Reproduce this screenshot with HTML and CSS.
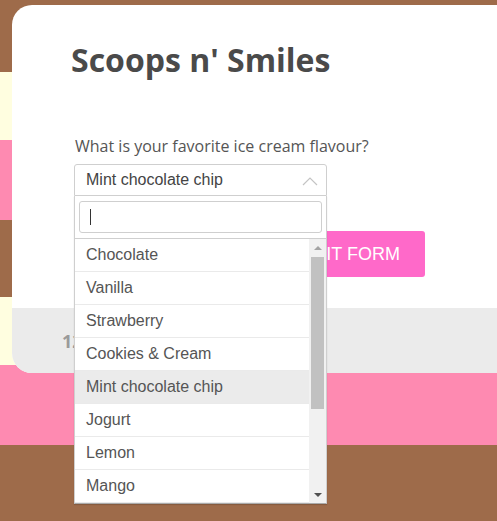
FILE: index.html
```html
<!DOCTYPE html>
<html lang="en">
<head>
<meta charset="utf-8">
<title>Scoops n' Smiles</title>
<link rel="stylesheet" href="styles.css">
</head>
<body>
<div class="card">
  <div class="card-body">
    <h1 class="title">Scoops n' Smiles</h1>
    <form class="form">
      <label class="label">What is your favorite ice cream flavour?</label>
      <div class="select-wrap">
        <div class="select">
          <span class="select-value">Mint chocolate chip</span>
          <svg class="chevron" width="16" height="10" viewBox="0 0 16 10"><polyline points="1,9 8,2 15,9" fill="none" stroke="#c4c4c4" stroke-width="1.2"/></svg>
        </div>
        <div class="dropdown">
          <div class="search"><div class="search-input"><span class="caret"></span></div></div>
          <div class="results">
            <ul class="options">
              <li class="option">Chocolate</li>
              <li class="option">Vanilla</li>
              <li class="option">Strawberry</li>
              <li class="option">Cookies &amp; Cream</li>
              <li class="option active">Mint chocolate chip</li>
              <li class="option">Jogurt</li>
              <li class="option">Lemon</li>
              <li class="option">Mango</li>
            </ul>
            <div class="scrollbar">
              <div class="sb-btn"><span class="tri-up"></span></div>
              <div class="sb-track"><div class="sb-thumb"></div></div>
              <div class="sb-btn"><span class="tri-down"></span></div>
            </div>
          </div>
        </div>
      </div>
      <div class="actions">
        <button type="button" class="submit">SUBMIT FORM</button>
      </div>
    </form>
  </div>
  <div class="card-footer">
    <span class="footer-text">123 Sundae Street</span>
  </div>
</div>
</body>
</html>
```

FILE: styles.css
```css
html, body {
  margin: 0;
  padding: 0;
}
body {
  min-height: 516px;
  overflow: hidden;
  background: linear-gradient(to bottom,
    #9e6b4a 0, #9e6b4a 72px,
    #fffee0 72px, #fffee0 140px,
    #fe8ab1 140px, #fe8ab1 220px,
    #9e6b4a 220px, #9e6b4a 297px,
    #fffee0 297px, #fffee0 365px,
    #fe8ab1 365px, #fe8ab1 445px,
    #9e6b4a 445px, #9e6b4a 521px);
  padding-top: 5px;
}
.card {
  margin-left: 12px;
  height: 368px;
  background: #fff;
  border-radius: 20px 0 0 20px;
  display: flex;
  flex-direction: column;
}
.card-body {
  flex: 1;
  padding: 36px 0 0 62px;
}
.title {
  margin: 0 0 0 -3px;
  font-family: "Open Sans", sans-serif;
  font-weight: 700;
  font-size: 32px;
  line-height: 38px;
  color: #4a4a4a;
}
.form {
  width: 351px;
  margin-top: 56px;
}
.label {
  display: block;
  margin-left: 1px;
  font-family: "Open Sans", sans-serif;
  font-size: 16px;
  line-height: 22px;
  color: #555;
}
.select-wrap {
  position: relative;
  width: 253px;
  margin-top: 7px;
}
.select {
  box-sizing: border-box;
  height: 32px;
  border: 1px solid #cfcfcf;
  border-radius: 3px 3px 0 0;
  display: flex;
  align-items: center;
  justify-content: space-between;
  padding: 0 8px 0 11px;
  background: #fff;
}
.select-value {
  font-family: "Liberation Sans", Arial, sans-serif;
  font-size: 16px;
  line-height: 30px;
  color: #444;
}
.chevron {
  display: block;
  margin-top: 1px;
}
.dropdown {
  position: absolute;
  top: 100%;
  left: 0;
  right: 0;
  box-sizing: border-box;
  border: 1px solid #cfcfcf;
  border-top: none;
  border-bottom-color: #aaa;
  background: #fff;
  box-shadow: 0 1px 1px rgba(0,0,0,0.15);
  z-index: 2;
}
.search {
  padding: 5px 4px 5px 4px;
}
.search-input {
  box-sizing: border-box;
  height: 32px;
  border: 1px solid #cfcfcf;
  border-radius: 3px;
  display: flex;
  align-items: center;
  padding-left: 10px;
}
.caret {
  display: block;
  width: 1px;
  height: 16px;
  background: #333;
}
.results {
  border-top: 1px solid #cfcfcf;
  display: flex;
  height: 264px;
}
.options {
  flex: 1;
  margin: 0;
  padding: 0;
  list-style: none;
  overflow: hidden;
}
.option {
  height: 32px;
  line-height: 32px;
  padding: 0 11px;
  border-bottom: 1px solid #eaeaea;
  font-family: "Liberation Sans", Arial, sans-serif;
  font-size: 16px;
  color: #555;
}
.option.active {
  background: #ebebeb;
}
.scrollbar {
  width: 17px;
  background: #f1f1f1;
  display: flex;
  flex-direction: column;
}
.sb-btn {
  height: 17px;
  display: flex;
  align-items: center;
  justify-content: center;
}
.tri-up {
  width: 0;
  height: 0;
  border-left: 4px solid transparent;
  border-right: 4px solid transparent;
  border-bottom: 4px solid #a3a3a3;
}
.tri-down {
  width: 0;
  height: 0;
  border-left: 4px solid transparent;
  border-right: 4px solid transparent;
  border-top: 4px solid #505050;
}
.sb-track {
  flex: 1;
  padding: 1px 2px 0 2px;
}
.sb-thumb {
  height: 152px;
  background: #c1c1c1;
}
.actions {
  display: flex;
  justify-content: flex-end;
  margin-top: 35px;
}
.submit {
  height: 46px;
  line-height: 46px;
  padding: 0 25px;
  border: none;
  border-radius: 3px;
  background: #ff69c9;
  color: #fff;
  font-family: "Liberation Sans", Arial, sans-serif;
  font-size: 18px;
  cursor: pointer;
}
.card-footer {
  height: 65px;
  background: #ebebeb;
  border-radius: 0 0 0 20px;
  display: flex;
  align-items: center;
  padding-left: 50px;
}
.footer-text {
  font-family: "Open Sans", sans-serif;
  font-weight: 700;
  font-size: 18px;
  color: #9a9a9a;
}
```
